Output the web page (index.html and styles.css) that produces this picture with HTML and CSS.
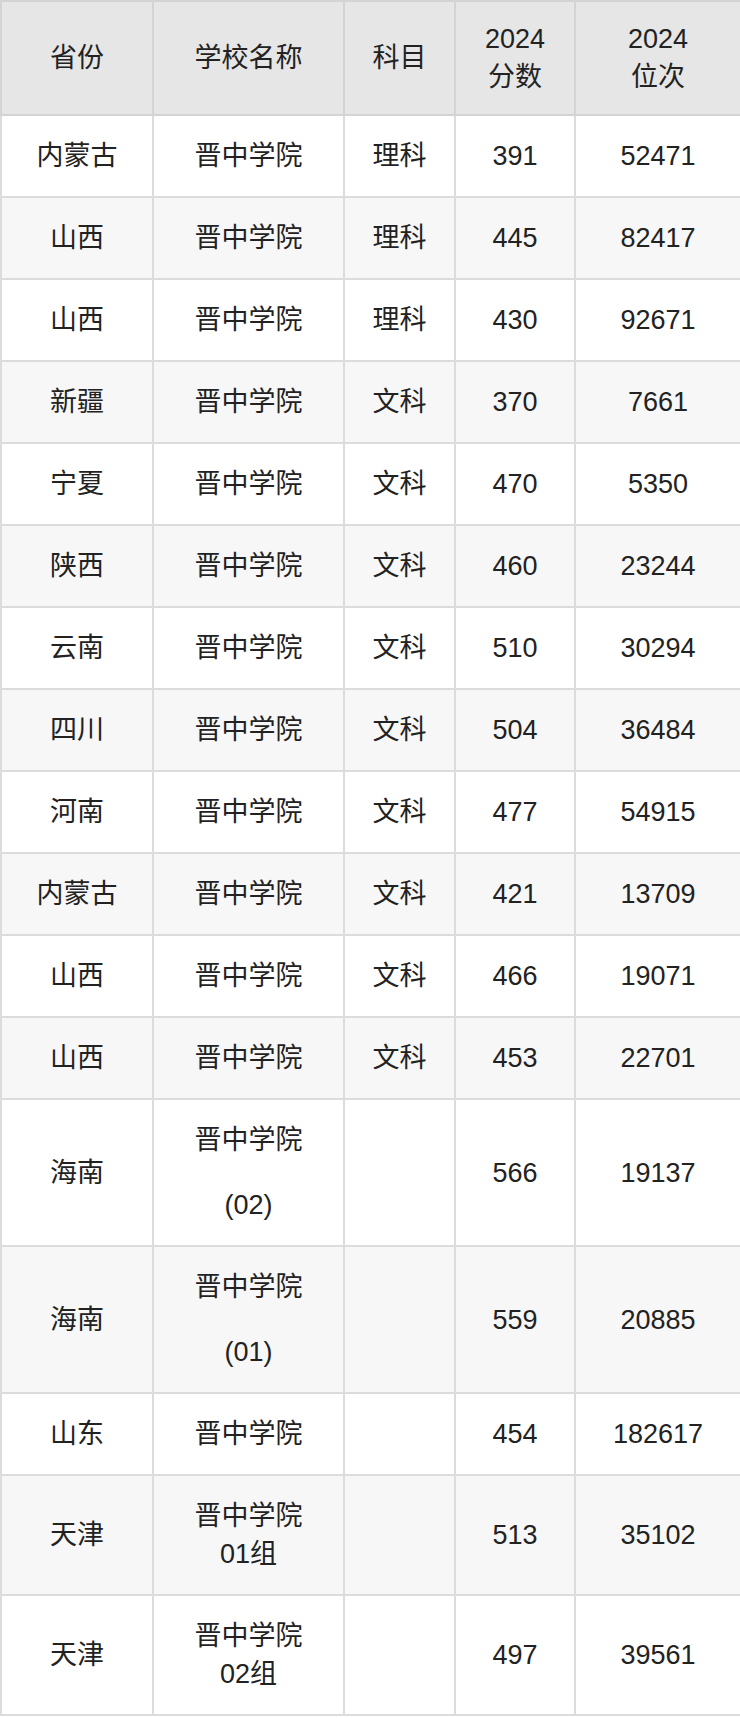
FILE: index.html
```html
<!DOCTYPE html>
<html lang="zh">
<head>
<meta charset="utf-8">
<title>晋中学院 2024 分数</title>
<link rel="stylesheet" href="styles.css">
</head>
<body>
<table class="score-table">
  <colgroup>
    <col class="c1"><col class="c2"><col class="c3"><col class="c4"><col class="c5">
  </colgroup>
  <thead>
    <tr><th>省份</th><th>学校名称</th><th>科目</th><th>2024<br>分数</th><th>2024<br>位次</th></tr>
  </thead>
  <tbody>
    <tr><td>内蒙古</td><td>晋中学院</td><td>理科</td><td>391</td><td>52471</td></tr>
    <tr><td>山西</td><td>晋中学院</td><td>理科</td><td>445</td><td>82417</td></tr>
    <tr><td>山西</td><td>晋中学院</td><td>理科</td><td>430</td><td>92671</td></tr>
    <tr><td>新疆</td><td>晋中学院</td><td>文科</td><td>370</td><td>7661</td></tr>
    <tr><td>宁夏</td><td>晋中学院</td><td>文科</td><td>470</td><td>5350</td></tr>
    <tr><td>陕西</td><td>晋中学院</td><td>文科</td><td>460</td><td>23244</td></tr>
    <tr><td>云南</td><td>晋中学院</td><td>文科</td><td>510</td><td>30294</td></tr>
    <tr><td>四川</td><td>晋中学院</td><td>文科</td><td>504</td><td>36484</td></tr>
    <tr><td>河南</td><td>晋中学院</td><td>文科</td><td>477</td><td>54915</td></tr>
    <tr><td>内蒙古</td><td>晋中学院</td><td>文科</td><td>421</td><td>13709</td></tr>
    <tr><td>山西</td><td>晋中学院</td><td>文科</td><td>466</td><td>19071</td></tr>
    <tr><td>山西</td><td>晋中学院</td><td>文科</td><td>453</td><td>22701</td></tr>
    <tr><td>海南</td><td><div class="split"><span>晋中学院</span><span>(02)</span></div></td><td></td><td>566</td><td>19137</td></tr>
    <tr><td>海南</td><td><div class="split"><span>晋中学院</span><span>(01)</span></div></td><td></td><td>559</td><td>20885</td></tr>
    <tr><td>山东</td><td>晋中学院</td><td></td><td>454</td><td>182617</td></tr>
    <tr><td>天津</td><td>晋中学院<br>01组</td><td></td><td>513</td><td>35102</td></tr>
    <tr><td>天津</td><td>晋中学院<br>02组</td><td></td><td>497</td><td>39561</td></tr>
  </tbody>
</table>
</body>
</html>
```
FILE: styles.css
```css
html, body {
  margin: 0;
  padding: 0;
  background: #ffffff;
}

.score-table {
  width: 740px;
  border-collapse: collapse;
  table-layout: fixed;
  font-family: "Liberation Sans", "Noto Sans CJK SC", sans-serif;
  font-size: 27px;
  line-height: 38px;
  color: #222222;
  text-align: center;
}

.c1 { width: 152px; }
.c2 { width: 191px; }
.c3 { width: 111px; }
.c4 { width: 120px; }
.c5 { width: 166px; }

.score-table th,
.score-table td {
  border: 2px solid #dcdcdc;
  vertical-align: middle;
  padding: 21px 4px;
}

.score-table th {
  background: #e6e6e6;
  font-weight: normal;
  padding: 18px 4px;
  border-color: #d4d4d4;
}

.score-table tbody tr:nth-child(even) td {
  background: #f7f7f7;
}

.split {
  display: flex;
  flex-direction: column;
  align-items: center;
  gap: 27px;
}
```
